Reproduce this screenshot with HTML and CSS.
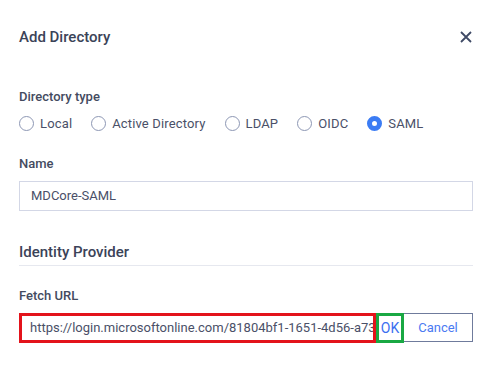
FILE: index.html
```html
<!DOCTYPE html>
<html lang="en">
    <head>
        <meta charset="UTF-8">
        <title>Add Directory</title>
        <link rel="stylesheet" href="styles.css">
    </head>

    <body>
        <div class="dialog">
            <div class="header">
                <div class="title">Add Directory</div>
                <button class="close" aria-label="Close">
                    <svg width="12" height="12" viewBox="0 0 12 12">
                        <path d="M1 1 L11 11 M11 1 L1 11" stroke="#3f4a66" stroke-width="1.8" fill="none"/>
                    </svg>
                </button>
            </div>

            <div class="field type_field">
                <div class="label">Directory type</div>
                <div class="radios">
                    <label class="radio"><span class="dot"></span>Local</label>
                    <label class="radio"><span class="dot"></span>Active Directory</label>
                    <label class="radio"><span class="dot"></span>LDAP</label>
                    <label class="radio"><span class="dot"></span>OIDC</label>
                    <label class="radio checked"><span class="dot"></span>SAML</label>
                </div>
            </div>

            <div class="field name_field">
                <div class="label">Name</div>
                <div class="input">MDCore-SAML</div>
            </div>

            <div class="section">Identity Provider</div>

            <div class="field url_field">
                <div class="label">Fetch URL</div>
                <div class="url_row">
                    <div class="input url">https://login.microsoftonline.com/81804bf1-1651-4d56-a73</div>
                    <button class="ok">OK</button>
                    <button class="cancel">Cancel</button>
                </div>
            </div>
        </div>
    </body>
</html>
```

FILE: styles.css
```css
body {
    margin: 0;
    background-color: white;
    font-family: Roboto, "Liberation Sans", sans-serif;
    color: #3b4358;
}
.dialog {
    padding: 0 18px 0 19px;
}
.header {
    display: flex;
    justify-content: space-between;
    align-items: center;
    padding-top: 26px;
    height: 22px;
}
.title {
    font-size: 15px;
    font-weight: 500;
    line-height: 22px;
}
.close {
    border: none;
    background: none;
    padding: 0;
    width: 12px;
    height: 12px;
    margin-right: 1px;
    display: flex;
}
.field {
    display: flex;
    flex-direction: column;
}
.label {
    font-size: 13px;
    font-weight: 500;
    line-height: 18px;
    color: #444b5f;
}
.type_field {
    margin-top: 40px;
}
.radios {
    display: flex;
    margin-top: 8px;
    height: 18px;
    align-items: center;
}
.radio {
    display: flex;
    align-items: center;
    font-size: 13px;
    letter-spacing: 0.15px;
    color: #4a5068;
    margin-right: 19px;
}
.dot {
    box-sizing: border-box;
    width: 15px;
    height: 15px;
    border: 1.5px solid #8d97b4;
    border-radius: 50%;
    margin-right: 6px;
}
.checked .dot {
    border: 5px solid #3b7cf4;
}
.name_field {
    margin-top: 23px;
}
.input {
    box-sizing: border-box;
    height: 30px;
    margin-top: 8px;
    border: 1px solid #d3d7e6;
    padding: 0 11px;
    font-size: 13px;
    line-height: 28px;
    color: #4a5068;
    white-space: nowrap;
    overflow: hidden;
}
.section {
    margin-top: 30px;
    font-size: 15px;
    font-weight: 500;
    line-height: 22px;
    padding-bottom: 2px;
    border-bottom: 1px solid #e6e8ef;
}
.url_field {
    margin-top: 21px;
}
.url_row {
    display: flex;
    margin-top: 8px;
}
.url {
    flex: 1;
    margin-top: 0;
    border: 3px solid #e3131b;
    padding: 0 8px;
    line-height: 24px;
}
.url_row button {
    font-family: Roboto, "Liberation Sans", sans-serif;
    font-size: 13px;
    color: #3b6ff0;
    background: white;
    height: 30px;
    box-sizing: border-box;
}
.ok {
    width: 28px;
    padding: 0;
    font-size: 14px !important;
    border: 3px solid #19a843;
}
.cancel {
    width: 69px;
    padding: 0;
    border: 1px solid #6f7b9c;
    border-left: none;
    height: 29px !important;
    color: #4a7af2 !important;
}
```
